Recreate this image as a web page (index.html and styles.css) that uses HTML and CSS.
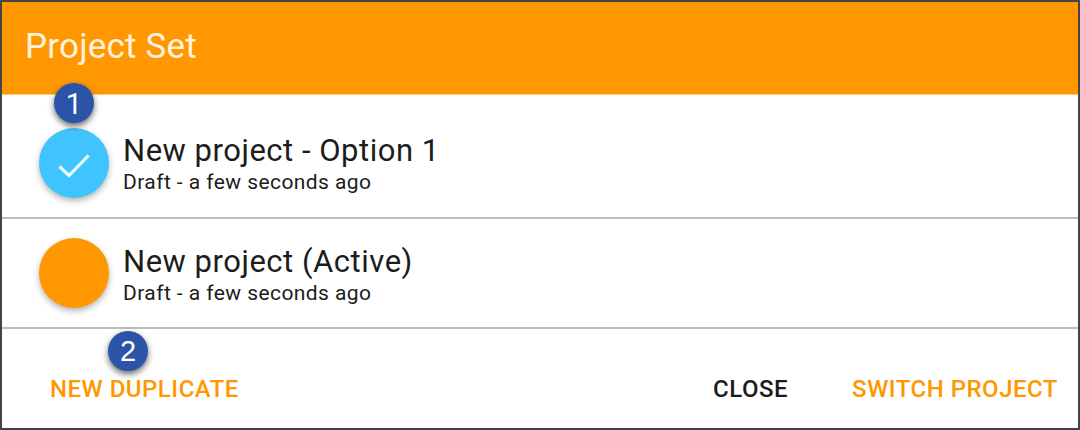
FILE: index.html
```html
<!DOCTYPE html>
<html lang="en">
<head>
<meta charset="utf-8">
<title>Project Set</title>
<link rel="stylesheet" href="styles.css">
</head>
<body>
<main class="dialog">
  <header class="header"><h1 class="title">Project Set</h1></header>
  <ul class="list">
    <li class="item">
      <span class="avatar avatar-selected">
        <svg class="check" viewBox="0 0 32 26"><path d="M1.5 13.5 L11 22.5 L30.5 2.5"/></svg>
        <span class="badge badge-one">1</span>
      </span>
      <div class="text"><div class="name">New project - Option 1</div><div class="meta">Draft - a few seconds ago</div></div>
    </li>
    <li class="item">
      <span class="avatar"></span>
      <div class="text"><div class="name">New project (Active)</div><div class="meta">Draft - a few seconds ago</div></div>
    </li>
  </ul>
  <footer class="actions">
    <button class="action">NEW DUPLICATE<span class="badge badge-two">2</span></button>
    <button class="action close">CLOSE</button>
    <button class="action">SWITCH PROJECT</button>
  </footer>
</main>
</body>
</html>
```
FILE: styles.css
```css
* { box-sizing: border-box; }
body { margin: 0; font-family: Roboto, sans-serif; }
.dialog { width: 1080px; height: 430px; border: 2px solid #444; background: #fff; display: flex; flex-direction: column; overflow: hidden; }
.header { height: 93px; flex: none; background: #ff9800; border-bottom: 1px solid #ffc980; padding: 23px 23px; }
.title { margin: 0; font-size: 35px; line-height: 44px; font-weight: 400; color: #fff1dc; letter-spacing: 0.2px; }
.list { list-style: none; margin: 0; padding: 0; }
.item { display: flex; gap: 14px; height: 110px; padding: 32px 0 0 37px; border-bottom: 2px solid #bdbdbd; }
.item:first-child { height: 124px; padding-top: 33px; }
.item:last-child { padding-top: 19px; }
.avatar { position: relative; display: flex; align-items: center; justify-content: center; width: 70px; height: 70px; border-radius: 50%; background: #ff9800; box-shadow: 0 3px 6px rgba(0,0,0,.3); }
.avatar-selected { background: #40c4ff; }
.check { width: 32px; height: 26px; margin-top: 5px; fill: none; stroke: #ecf9ff; stroke-width: 3.2; }
.text { padding-top: 4px; color: #1c1c1c; }
.item:last-child .text { padding-top: 5px; }
.name { font-size: 31px; line-height: 37px; letter-spacing: 0.52px; white-space: nowrap; }
.meta { font-size: 21px; line-height: 26px; letter-spacing: 0.43px; }
.badge { position: absolute; width: 40px; height: 40px; border-radius: 50%; background: #2b54a8; color: #fff; font: 400 29px/41px "Liberation Sans", sans-serif; letter-spacing: 0; text-align: center; box-shadow: 0 3px 6px rgba(0,0,0,.6); }
.badge-one { left: 15px; top: -45px; font-family: Roboto, sans-serif; line-height: 42px; }
.badge-two { left: 58px; top: -42px; }
.actions { flex: 1; display: flex; align-items: flex-start; padding: 44px 20px 0 48px; }
.action { position: relative; border: 0; padding: 0; background: none; font: 500 24px/32px Roboto, sans-serif; letter-spacing: 0.5px; color: #ff9800; white-space: nowrap; }
.close { margin-left: auto; margin-right: 64px; color: #1c1c1c; }
```
